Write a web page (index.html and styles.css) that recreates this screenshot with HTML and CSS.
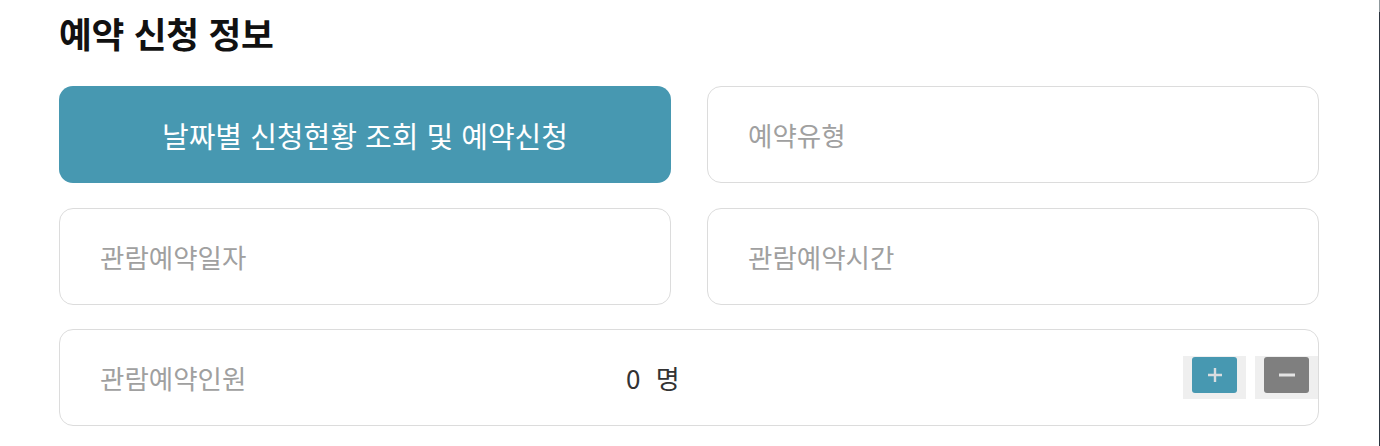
FILE: index.html
```html
<!DOCTYPE html>
<html lang="ko">
<head>
<meta charset="utf-8">
<title>예약 신청 정보</title>
<link rel="stylesheet" href="styles.css">
</head>
<body>
<main class="page">
  <h2 class="title">예약 신청 정보</h2>
  <div class="grid">
    <button class="cell cell-primary" type="button">날짜별 신청현황 조회 및 예약신청</button>
    <div class="cell"><span class="label">예약유형</span></div>
    <div class="cell"><span class="label">관람예약일자</span></div>
    <div class="cell"><span class="label">관람예약시간</span></div>
    <div class="cell cell-wide">
      <span class="label label-fixed">관람예약인원</span>
      <span class="count">0 명</span>
      <div class="controls">
        <div class="ctrl">
          <button class="ctrl-btn ctrl-plus" type="button" aria-label="증가">
            <svg width="14" height="14" viewBox="0 0 14 14"><path d="M7 0v14M0 7h14" stroke="#d9dde0" stroke-width="2.4"/></svg>
          </button>
        </div>
        <div class="ctrl">
          <button class="ctrl-btn ctrl-minus" type="button" aria-label="감소">
            <svg width="16" height="14" viewBox="0 0 16 14"><path d="M0 7h16" stroke="#e4e4e4" stroke-width="3"/></svg>
          </button>
        </div>
      </div>
    </div>
  </div>
</main>
</body>
</html>
```
FILE: styles.css
```css
html {
  background: linear-gradient(#8f989c 0 12px, #2c3540 12px);
}
body {
  margin: 0;
  width: 1379px;
  height: 446px;
  background: #fff;
  font-family: "Noto Sans CJK KR", "Noto Sans", sans-serif;
  overflow: hidden;
}
.page {
  padding: 0 0 0 59px;
  width: 1260px;
}
.title {
  margin: 0;
  padding-top: 8px;
  height: 86px;
  box-sizing: border-box;
  font-size: 35.7px;
  font-weight: 700;
  line-height: 50px;
  color: #111;
  letter-spacing: -0.3px;
}
.grid {
  display: grid;
  grid-template-columns: 612px 612px;
  column-gap: 36px;
  row-gap: 24.5px;
  grid-auto-rows: 97px;
}
.cell {
  box-sizing: border-box;
  border: 1px solid #dcdcdc;
  border-radius: 14px;
  background: #fff;
  display: flex;
  align-items: center;
  padding: 0 0 0 40px;
}
.cell-primary {
  border: none;
  background: #4798b1;
  color: #fff;
  font-family: inherit;
  font-size: 29px;
  justify-content: center;
  padding: 0;
  cursor: pointer;
}
.label {
  font-size: 26.5px;
  color: #a0a0a0;
}
.cell-wide {
  grid-column: 1 / 3;
}
.label-fixed {
  width: 526px;
}
.count {
  font-size: 26px;
  color: #333;
  word-spacing: 8px;
}
.controls {
  margin-left: auto;
  display: flex;
  gap: 9px;
}
.ctrl {
  background: #efefef;
  width: 63px;
  height: 43px;
  box-sizing: border-box;
  padding: 1px 9px 6px;
}
.ctrl-btn {
  width: 45px;
  height: 36px;
  border: none;
  border-radius: 3px;
  padding: 0;
  display: flex;
  align-items: center;
  justify-content: center;
  cursor: pointer;
}
.ctrl-plus { background: #4798b1; }
.ctrl-minus { background: #7f7f7f; }
```
